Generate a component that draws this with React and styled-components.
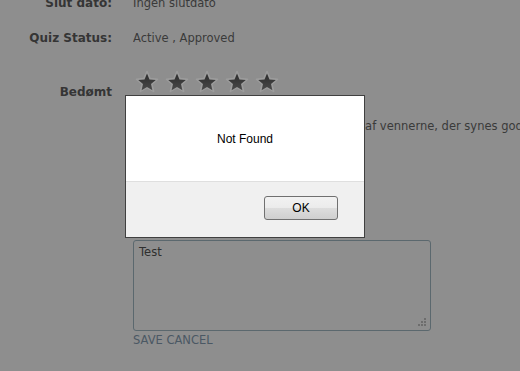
import React from "react";
import styled, { createGlobalStyle } from "styled-components";

const Global = createGlobalStyle`
  html, body { margin: 0; padding: 0; background: #8e8e8e; }
  body { width: 520px; height: 371px; overflow: hidden; position: relative;
    font-family: "DejaVu Sans", Verdana, sans-serif; font-size: 12px; }
`;

const Page = styled.div`
  margin-top: -5px;
  display: flex;
  flex-direction: column;
`;

const Row = styled.div`
  display: grid;
  grid-template-columns: 112px 1fr;
  column-gap: 21px;
  margin-top: ${(p) => p.$top || 0}px;
  align-items: start;
`;

const Label = styled.div`
  text-align: right;
  font-weight: bold;
  color: #353535;
  line-height: 16px;
  margin-top: ${(p) => p.$offset || 0}px;
`;

const Value = styled.div`
  color: #3a3a3a;
  font-size: 11.5px;
  line-height: 16px;
  white-space: nowrap;
  overflow: hidden;
`;

const Stars = styled.div`
  display: flex;
  gap: 6px;
  margin-left: 2px;
  height: 24px;
  align-items: center;
`;

const StarSvg = styled.svg`
  width: 24px;
  height: 24px;
  display: block;
`;

const Star = () => (
  <StarSvg viewBox="0 0 24 24">
    <defs>
      <linearGradient id="sg" x1="0" y1="0" x2="0" y2="1">
        <stop offset="0" stopColor="#2c2c2c" />
        <stop offset="1" stopColor="#4a4a4a" />
      </linearGradient>
    </defs>
    <path
      d="M12 1.6l3.1 6.9 7.4.7-5.6 4.9 1.7 7.3-6.6-3.9-6.6 3.9 1.7-7.3-5.6-4.9 7.4-.7z"
      fill="#a0a0a0"
      stroke="#9c9c9c"
      strokeWidth="1.6"
      strokeLinejoin="round"
    />
    <path
      d="M12 3.6l2.5 5.8 6.3.5-4.8 4.2 1.4 6.2-5.4-3.3-5.4 3.3 1.4-6.2-4.8-4.2 6.3-.5z"
      fill="url(#sg)"
    />
  </StarSvg>
);

const TextArea = styled.div`
  border: 1px solid #5b686e;
  border-radius: 3px;
  position: relative;
  color: #2f2f2f;
  padding: 4px 5px;
  line-height: 14px;
  width: 286px;
  height: 81px;
  font-size: 11.5px;
`;

const Grip = styled.svg`
  position: absolute;
  right: 3px;
  bottom: 3px;
  width: 10px;
  height: 10px;
`;

const Links = styled.div`
  color: #4b5864;
  font-size: 11.5px;
  line-height: 16px;
  margin-top: 1px;
`;

const Dialog = styled.div`
  position: absolute;
  left: 125px;
  top: 95px;
  width: 238px;
  height: 141px;
  border: 1px solid #404040;
  background: #f0f0f0;
  display: flex;
  flex-direction: column;
  font-family: "Liberation Sans", Arial, sans-serif;
`;

const DialogBody = styled.div`
  background: #ffffff;
  height: 85px;
  border-bottom: 1px solid #dfdfdf;
  display: flex;
  justify-content: center;
  align-items: center;
  color: #000;
  font-size: 12px;
`;

const DialogFooter = styled.div`
  flex: 1;
  display: flex;
  justify-content: flex-end;
  align-items: flex-start;
  padding: 14px 26px 0 0;
`;

const OkButton = styled.button`
  width: 74px;
  height: 24px;
  border: 1px solid #707070;
  border-radius: 3px;
  background: linear-gradient(#f2f2f2 0%, #ebebeb 50%, #dddddd 51%, #cfcfcf 100%);
  font-family: "Liberation Sans", Arial, sans-serif;
  font-size: 12px;
  color: #000;
  padding: 0;
`;

export default function App() {
  return (
    <>
      <Global />
      <Page>
        <Row>
          <Label>Slut dato:</Label>
          <Value>Ingen slutdato</Value>
        </Row>
        <Row $top={19}>
          <Label>Quiz Status:</Label>
          <Value>Active , Approved</Value>
        </Row>
        <Row $top={24}>
          <Label $offset={14}>Bedømt</Label>
          <Stars>
            <Star />
            <Star />
            <Star />
            <Star />
            <Star />
          </Stars>
        </Row>
        <Row $top={18}>
          <div />
          <Value>Denne quiz er allerede blevet anbefalet af vennerne, der synes godt om den.</Value>
        </Row>
        <Row $top={106}>
          <div />
          <div>
            <TextArea>
              Test
              <Grip viewBox="0 0 10 10">
                <rect x="7" y="1" width="2" height="2" fill="#6d6d6d" />
                <rect x="4" y="4" width="2" height="2" fill="#6d6d6d" />
                <rect x="7" y="4" width="2" height="2" fill="#6d6d6d" />
                <rect x="1" y="7" width="2" height="2" fill="#6d6d6d" />
                <rect x="4" y="7" width="2" height="2" fill="#6d6d6d" />
                <rect x="7" y="7" width="2" height="2" fill="#6d6d6d" />
              </Grip>
            </TextArea>
            <Links>SAVE CANCEL</Links>
          </div>
        </Row>
      </Page>
      <Dialog>
        <DialogBody>Not Found</DialogBody>
        <DialogFooter>
          <OkButton>OK</OkButton>
        </DialogFooter>
      </Dialog>
    </>
  );
}
